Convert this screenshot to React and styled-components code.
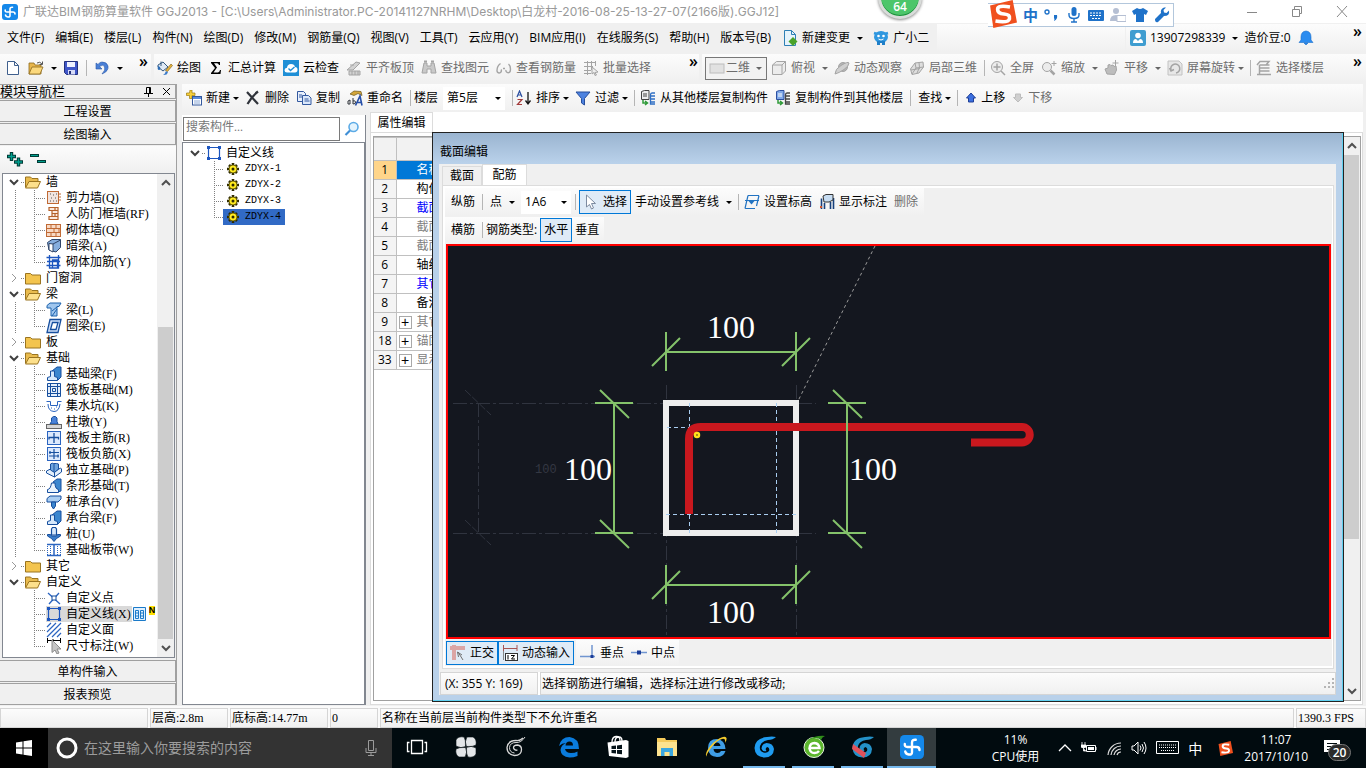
import React from "react";
import styled, { createGlobalStyle, css } from "styled-components";

const ui = `"Open Sans", "Noto Sans CJK SC", sans-serif`;
const song = `"Liberation Serif", "Noto Sans CJK SC", serif`;

const Global = createGlobalStyle`
  * { box-sizing: border-box; }
  body { margin: 0; font: 12px/16px ${ui}; color: #000; background: #f0f0f0; overflow: hidden; }
  button, input, select { font: inherit; color: inherit; margin: 0; padding: 0; border: 0; background: none; border-radius: 0; }
  ul { list-style: none; margin: 0; padding: 0; }
  svg { display: block; flex: none; }
`;

/* ---------- icon drawings, 16 x 16 grid ---------- */

const G = "#a4a4a4";
const B = "#174f9e";
const art = {
  app: (<><rect width="16" height="16" rx="3" fill="#1488ea" /><path d="M8 8V5Q8 3 10.500 3.200M8 8h3q2 0 2 2M8 8v3.500q0 1.800-2.200 1.500-2-.300-2.300-2M8 8H5Q3 8 3.200 6" fill="none" stroke="#fff" strokeWidth="1.600" strokeLinecap="round" /></>),
  doc: <path d="M2.500 1.500h7l4 4v9h-11zM9.500 1.500v4h4" fill="#fff" stroke="#3f5f8d" />,
  open: (<><path d="M1 3h5l1 2h6v9H1z" fill="#e8b64c" stroke="#8d6a1d" strokeWidth=".8" /><path d="M1 14l3-7h11l-3 7z" fill="#fbd87c" stroke="#8d6a1d" strokeWidth=".8" /><path d="M9 3q3-2 5 1M14.500 1.500v3h-3" fill="none" stroke="#555" /></>),
  save: (<><path d="M1.500 1.500h13v13h-11l-2-2z" fill="#3f56c8" stroke="#23307c" /><rect x="4" y="2" width="8" height="5" fill="#eef1ff" /><rect x="5" y="10" width="7" height="4.500" fill="#d7dcf7" /><rect x="6" y="11" width="2" height="3" fill="#23307c" /></>),
  undo: <path d="M2 3v6h6L5.500 6.500Q9 4 10.500 6.500 12 10 8 14q7-3 6-8-1-4-6-4Q5.500 2 4 4.500z" fill="#4a80d6" stroke="#2756a8" strokeWidth=".6" />,
  bucket: (<><path d="M1 5l5-3 5 5-5 4-5-4z" fill="#dfe9f5" stroke="#35597f" /><path d="M4 6V1.500" stroke="#35597f" /><path d="M1 6q-1 4 1 4t1-3" fill="#2d6cb5" /><path d="M14 4l1.500 1.500-5 6-2-1z" fill="#e4b23c" stroke="#7b5a16" strokeWidth=".6" /><path d="M9 11l2 1.500q-1 3-5 2.500 2-1 3-4z" fill="#3d7cc9" /></>),
  sigma: <path d="M3 2h9v3h-1q-.500-1.800-2-1.800H6L9 7.500 5.500 12.400H10q1.500 0 2-2.400h1l-.500 4H3v-1l4-5-4-5z" fill="#000" />,
  cloudcheck: (<><rect width="16" height="16" fill="#1f8fd6" /><path d="M4 12.500q-2.500 0-2.500-2.300T4 7.700Q4.500 4 8 4t4 3q2.500 0 2.500 2.700T12 12.500z" fill="#fff" /><path d="M5.500 8.500l2 2 4-3.500" fill="none" stroke="#1f8fd6" strokeWidth="1.400" /></>),
  align: (<><path d="M1 10l9-8 4 1-7 7zM3 11h11v4H3z" fill="#d2d2d2" stroke={G} /><path d="M6 11v4M9 11v4M12 11v4M4 5h4" stroke={G} /></>),
  binoc: (<><path d="M3 3h3v3h4V3h3l2 10h-5V9H6v4H1z" fill="#c9c9c9" stroke={G} /><path d="M3 1.500h3M10 1.500h3" stroke={G} strokeWidth="2" /></>),
  glasses: <path d="M5 9.500a2.200 2.200 0 1 1-4 1Q1 6 4.500 3.500M7 8.500h2M10 10a2.200 2.200 0 1 0 4.300 1Q15 6 12.500 4" fill="none" stroke={G} strokeWidth="1.400" />,
  gridsel: (<><path d="M1 2.500h12M1 6.500h9M1 10.500h7M1 13.500h7M4.500 1v14M8.500 1v9M12.500 1v5" stroke={G} fill="none" /><path d="M9 7l6 5-3 .500L13.500 15l-1.500.500-1-3-2 1.500z" fill="#eee" stroke={G} /></>),
  flat: <rect x="1" y="4" width="14" height="9" fill="#e1e1e1" stroke="#bcbcbc" />,
  cube: <path d="M1.500 5l4-3.500h9V11L11 14.500H1.500zM1.500 5H11v9.500M11 5l3.500-3.500" fill="#ececec" stroke={G} />,
  orbit: (<><circle cx="9" cy="7" r="4.500" fill="#b5b5b5" stroke={G} /><path d="M1 14Q1 9 7 5.500 14 1 15 3q0 3-5 6.500T1 14" fill="#d0d0d0" stroke={G} /></>),
  local3d: (<><path d="M1.500 9L6 3l8-1 .500 5L10 13l-7 1.500z" fill="#dedede" stroke={G} /><path d="M6 3l1 5-4 6M7 8l7.500-1M10 2.500l.500 5L8 13M2 10l9-1.500" fill="none" stroke={G} /></>),
  full: (<><circle cx="7" cy="7" r="5.500" fill="#ececec" stroke={G} /><path d="M7 3.500v7M3.500 7h7M11 11l4 4" stroke={G} strokeWidth="1.500" /></>),
  zoom: (<><circle cx="6" cy="7" r="4.500" fill="#ececec" stroke={G} /><path d="M9.500 10.500l4 4" stroke={G} strokeWidth="2.500" /><path d="M13 1v5M10.500 3.500h5" stroke={G} /></>),
  pan: (<><path d="M3 14L1 9l3-1V5l2-.500 1 1 2-.500 1 1.500 2-.500.500 4-2 4.500z" fill="#bdbdbd" stroke={G} /><path d="M11.500 0v6M8.500 3h6" stroke={G} /></>),
  rotate: (<><path d="M1 1h11l3 3v11H1z" fill="#e7e7e7" stroke="#c2c2c2" /><path d="M4 10a4.500 4.500 0 1 1 5 3M2.500 8L4 11l3-1.500" fill="none" stroke={G} strokeWidth="1.500" /></>),
  floors: <path d="M1 5l3-3.500h9L10 5M3.500 5h10M3.500 8h10M3.500 11h10M1 14.500h14M3.500 5v9" fill="none" stroke={G} strokeWidth="1.500" />,
  newitem: (<><path d="M4 0h2v3h3v2.500H6v3H3.500v-3H.500V3h3z" fill="#f7cf3a" stroke="#9b7a0b" strokeWidth=".7" /><rect x="6.500" y="6.500" width="9" height="8.500" fill="#fff" stroke="#33589d" /><path d="M7 8h8" stroke="#5a8adb" strokeWidth="2" /><path d="M8 11h6M8 13h6" stroke="#8ba9d8" /></>),
  cross: <path d="M2 2l11 12M13 1.500Q7 6 2.500 14" fill="none" stroke="#30343b" strokeWidth="2.200" />,
  copy: (<><path d="M1.500 1.500h6l2 2v8h-8z" fill="#e8f0fd" stroke="#33599f" /><path d="M6.500 5.500h6l2.500 2.500v6.500H6.500z" fill="#dbe8fb" stroke="#33599f" /><path d="M3 5h3M3 7h3M8.500 9h4M8.500 11h5" stroke="#33599f" /></>),
  rename: (<><path d="M3 4l4-3 7 .500 1 4-4-2-4 2z" fill="#d4a73b" stroke="#6c5418" strokeWidth=".7" /><path d="M1 14q-1-4 2-4v4zM6 8v6q3 0 2.500-2T6 11" fill="none" stroke="#30343b" /><path d="M8.500 15.500L13 6l2 9.500M10 12.500h4" fill="none" stroke="#274fa8" strokeWidth="1.600" /></>),
  sort: (<><path d="M1 7l2.500-6L6 7M2 5h3" fill="none" stroke="#2c4fa0" strokeWidth="1.200" /><path d="M1.500 9.500H6L1.500 14.500H6" fill="none" stroke="#a33a3a" strokeWidth="1.200" /><path d="M12 2v11M9.500 10.500L12 14l2.500-3.500" fill="none" stroke="#111" strokeWidth="1.300" /></>),
  filter: <path d="M1 2h14L9.500 8.500V15l-3-2V8.500z" fill="#4d82e0" stroke="#274f9c" />,
  copyfrom: (<><path d="M1.500 1.500l3-1H9v9H1.500z" fill="#eee" stroke="#444" /><path d="M3 4h4M3 6h4" stroke="#444" /><path d="M3 10v3h4M5 11l2.500 2L5 15" fill="none" stroke="#2f9a39" strokeWidth="1.500" /><path d="M15 3h-3q-1.500 0-1.500 2v9H15M15 6h-4M15 9h-4M15 12h-4" fill="none" stroke="#2f6fc4" strokeWidth="1.300" /></>),
  copyto: (<><path d="M1.500 1.500l3-1H9v9H1.500z" fill="#7fa8e8" stroke="#2c4fa0" /><path d="M3 4h4M3 6h4" stroke="#fff" /><path d="M3 10v3h4M5 11l2.500 2L5 15" fill="none" stroke="#2f9a39" strokeWidth="1.500" /><path d="M15 3h-3q-1.500 0-1.500 2v9H15M15 6h-4M15 9h-4M15 12h-4" fill="none" stroke="#444" strokeWidth="1.300" /></>),
  up: <path d="M6 3l4.500 5H8.500v4h-5V8h-2z" fill="#3b6fdf" stroke="#1e3f96" />,
  down: <path d="M6 12L1.500 7.500h2V4h5v3.500h2z" fill="#cfcfcf" stroke="#bdbdbd" />,
  change: (<><path d="M2.500.500h7l4 4v11h-11z" fill="#e6f3fb" stroke="#2e7fb5" /><path d="M9.500.500v4h4" fill="none" stroke="#2e7fb5" /><path d="M11 7l4.500 4.500L11 16l-4.500-4.500z" fill="#4aa32a" /></>),
  mascot: (<><path d="M1 3l3 1M15 3l-3 1" stroke="#2f97df" strokeWidth="2.500" /><ellipse cx="8" cy="7" rx="7" ry="6" fill="#2f97df" /><path d="M4 11h8v4H9v-2H7v2H4z" fill="#1f7fc8" /><circle cx="5.500" cy="6" r="1.300" fill="#fff" /><circle cx="10.500" cy="6" r="1.300" fill="#fff" /><path d="M5.500 9q2.500 2 5 0" stroke="#fff" fill="none" /></>),
  avatar: (<><rect width="16" height="16" rx="2" fill="#3f9dd0" /><circle cx="8" cy="5.500" r="2.800" fill="#fff" /><path d="M3 13q0-4 3-4l2 2 2-2q3 0 3 4z" fill="#fff" /></>),
  bell: <path d="M8 1q5 .500 5 6v3l2 2.500H1L3 10V7q0-5.500 5-6zM6 13h4l-2 2z" fill="#2b8cf0" stroke="#1b6ecb" strokeWidth=".6" />,
  search: (<><circle cx="9.500" cy="6" r="4.500" fill="#e3f3fd" stroke="#5cabe6" strokeWidth="1.600" /><path d="M6 9.500L1.500 14" stroke="#3f8fd6" strokeWidth="2.200" /></>),
  folder: <path d="M.500 3.500h5l1.500 1.500h8.500v9H.500z" fill="#f3c44e" stroke="#9a7420" />,
  folderopen: (<><path d="M.500 13V3h5l1.500 1.500h6V7" fill="#e9bb4e" stroke="#9a7420" /><path d="M.500 14L4 7.500h11.500L12.500 14z" fill="#fde08c" stroke="#9a7420" /></>),
  shear: (<><rect x="1.500" y="1.500" width="11" height="12" fill="#f1e4df" stroke="#c06a35" /><path d="M4 4h1M7 5h1M10 4h1M5 8h1M9 8h1M4 11h1M7 11h1M10 11h1" stroke="#555" /><path d="M13 4h2M13 7h2M13 10h2" stroke="#c06a35" /></>),
  airraid: <path d="M3 1.500h9v3v9H3v-3h3v-6H3zM6 4.500h6M6 7.500h6M6 10.500h6M9 2v2.500M9 7.500v3" fill="#fbeadf" stroke="#b5622b" strokeWidth="1.200" />,
  brick: (<><rect x=".500" y="2.500" width="14" height="12" fill="#f8d9c4" stroke="#c06a35" /><path d="M1 6.500h14M1 10.500h14M5 3v3.500M10 3v3.500M8 6.500v4M13 6.500v4M5 10.500v4M10 10.500v4" stroke="#c06a35" /></>),
  beamdark: (<><path d="M1.500 4.500L6 1.500h8.500v8L10 14l-7-2z" fill="#86aede" stroke="#2f4468" /><path d="M3 5.500l4 .500V14l-4-2z" fill="#fff" stroke="#2f4468" /><path d="M7 6l7.500-4" stroke="#2f4468" /></>),
  rebarwall: <path d="M.500 3.500h14M.500 11.500h14M3.500 1v13h9V1M6.500 14V6h5v8M1 7.500h13" fill="none" stroke="#1d56bf" strokeWidth="1.300" />,
  beam: (<><path d="M1 3.500L4 1h11l-2 3.500h-2V14H5V6H1z" fill="#9fc6ee" stroke="#1d62ad" /><path d="M6 14l5-7M6 9l5-4" stroke="#1d62ad" /></>),
  ring: <path d="M4 1.500h11L12 14.500H1zM6.500 4.500L4.500 11.500h5.500L12 4.500z" fill="#cfe0fa" stroke={B} strokeWidth="1.300" />,
  fbeam: (<><path d="M6 5l5-4h4v10l-3 3H6z" fill="#3a86cf" stroke={B} /><path d="M1.500 14.500v-3l3-1V5h4v5.500l3 1v3z" fill="#d5e8fb" stroke={B} /></>),
  raft: <path d="M1.500 1.500h13v13h-13zM4.500 1v14M11.500 1v14M1 4.500h14M1 11.500h14M6.500 6.500h3v3h-3z" fill="#e5effb" stroke={B} />,
  pit: <path d="M.500 3.500h4v4h7v-4h4M2 6q0 7 6 7.500 5 0 6-7.500M5 10h1M8 11h1M10 9h1" fill="none" stroke="#2a64c0" />,
  pier: (<><path d="M5.500 7.500V4l2-1.500h2L11 4v3.500l1 2.500H4z" fill="#4a82d8" stroke={B} /><rect x=".500" y="10.500" width="15" height="4" fill="#d6d6d6" stroke="#666" /></>),
  mainbar: (<><rect x="1.500" y="1.500" width="13" height="13" fill="#dce9fd" stroke="#2a64c0" /><path d="M8 3v10M3 9.500V7.500h9.500v2" fill="none" stroke={B} strokeWidth="1.300" /></>),
  negbar: (<><rect x="1.500" y="1.500" width="13" height="13" fill="#dce9fd" stroke="#2a64c0" /><path d="M8 3v10M3 6.500h10M3 10h10M4 5v3M12 8.500v3" fill="none" stroke={B} strokeWidth="1.200" /></>),
  isolated: (<><path d="M.500 9l4-2 4 3 6-4 1 1v3l-7 5-8-4z" fill="#e3effb" stroke={B} /><path d="M4.500 8V2l2-1 1 1V1.500h3l2 .500v5l-4 3.500z" fill="#6fa5de" stroke={B} /><path d="M8.500 10v5M8 2v8" stroke={B} /></>),
  strip: (<><path d="M7 4l4-3h4v12l-3 1z" fill="#3a86cf" stroke={B} /><path d="M1.500 14.500v-3q3 0 4-6.500h3.500q0 6 3.500 6.500v3z" fill="#e9f3fd" stroke={B} /></>),
  pilecap: (<><path d="M1 4.500L4 2h11v3l-3 3H1z" fill="#a9cdf1" stroke={B} /><path d="M5.500 8v4l2 3 2-3V8z" fill="#3a86cf" stroke={B} /></>),
  pile: (<><path d="M5.500 3l1-1.500h3l1 1.500v6h-5z" fill="#d7e8fa" stroke={B} strokeWidth="1.200" /><path d="M1.500 8.500h3l1 1.500h5l1-1.500h3v1.500l-4 2.500L8 15.500 5.500 12.500l-4-2.500z" fill="#3a7cc9" stroke={B} /></>),
  slabband: (<><path d="M1 2.500h14M1 13.500h14M8 3v10" stroke="#2a64c0" strokeWidth="1.500" /><path d="M1.500 4v9M4.500 4v9M11.500 4v9M14.500 4v9" stroke="#2a64c0" strokeDasharray="1 1" /></>),
  point: (<><path d="M2 3l12 11M13 3L3 14" stroke="#2a64c0" strokeWidth="1.300" /><rect x="6" y="6" width="4" height="4" fill="#fff" stroke={B} /></>),
  line: (<><path d="M2.500 2.500h11v11h-11z" fill="none" stroke="#1d56bf" strokeWidth="1.200" /><path d="M1 1h3v3H1zM12 1h3v3h-3zM1 12h3v3H1zM12 12h3v3h-3z" fill="#1d56bf" /></>),
  area: <path d="M1 5l4-4M1 10l9-9M1 15L15 1M6 15l9-9M11 15l4-4" stroke="#2a64c0" strokeWidth="1.200" />,
  dim: (<><path d="M1.500 0v5M14.500 0v5M1 2.500h14M7 1v3" stroke="#000" /><path d="M6 2l9 9h-4l2 4-2 1-2-4-3 2.500z" fill="#c5c5c5" stroke="#8c8c8c" /></>),
  pages: <path d="M1.500 1.500h12v13h-12zM3.500 4.500h3v8h-3zM8.500 4.500h3v8h-3zM3.500 7h3M8.500 7h3M3.500 10h3M8.500 10h3" fill="#dff0ff" stroke="#1b7ac9" />,
  gear: (<><path d="M6 0v12M0 6h12M2 2l8 8M10 2l-8 8" stroke="#2e2a00" strokeWidth="2.600" /><circle cx="6" cy="6" r="4" fill="#ffec20" stroke="#5b5000" strokeWidth=".8" /><circle cx="6" cy="6" r="1.500" fill="#2e2a00" /></>),
  cursor: <path d="M3.500 1v12l3-2.500 2 4.500 2-1-2-4.500h4z" fill="#fff" stroke="#7d8ba0" />,
  level: (<><path d="M4 1.500h11M1 14.500h10M4 1.500L1 14.500M15 1.500L12.500 12M1 6.500h14" fill="none" stroke="#2273c2" strokeWidth="1.200" /><path d="M4.500 7h6L7.500 10.500z" fill="#2273c2" /></>),
  label: (<><path d="M2.500 15V4.500M14.500 15V4M5.500 15V9M11.500 15V8" stroke="#17407c" strokeWidth="1.600" /><path d="M4 2l3-1.500h7V6l-4 2H5z" fill="#c7ddf3" stroke="#333" /><path d="M2 12v2" stroke="#d1542b" strokeWidth="2" /></>),
  ortho: (<><path d="M0 3h15M4 0v15" stroke="#dba5a5" strokeWidth="4" /><path d="M8 7l5 8M7.500 7l1 5M7.500 7l4.500 3" stroke="#6f6f6f" fill="none" /></>),
  dyn: (<><path d="M1.500 0v6M15 0v6M1 3.500h14" stroke="#a85454" /><rect x="3.500" y="8.500" width="12" height="7" fill="#fff" stroke="#333" /><path d="M6 10v4.500M9 10.500h3.500l-3 3.500H13" fill="none" stroke="#000" /><path d="M1.500 6v9" stroke="#888" /></>),
  perp: (<><path d="M12 0v13M0 11.500h15" stroke="#7095d0" strokeWidth="1.500" /><rect x="10.500" y="10" width="3" height="3" fill="#1b3d98" /></>),
  mid: (<><path d="M0 7.500h16" stroke="#7095d0" strokeWidth="1.500" /><rect x="6" y="5.500" width="4" height="4" fill="#1b3d98" /></>),
  plus2: (<><path d="M4.500 1v9M0 5.500h9M11.500 6.500v9M7 11h9" stroke="#003b35" strokeWidth="3.400" /><path d="M4.500 2v7M1 5.500h7M11.500 7.500v7M8 11h7" stroke="#00a08f" strokeWidth="1.400" /></>),
  minus2: (<><path d="M0 4.500h9M7 10.500h9" stroke="#003b35" strokeWidth="3" /><path d="M1 4.500h7M8 10.500h7" stroke="#00a08f" /></>),
};

const boxes = { gear: [12, 12], up: [12, 16], down: [12, 16] };

function Icon({ name, size = 16 }) {
  const [w, h] = boxes[name] || [16, 16];
  return <svg width={w === 16 ? size : w} height={w === 16 ? size : h} viewBox={`0 0 ${w} ${h}`} aria-hidden="true">{art[name]}</svg>;
}

const Caret = styled.i`
  flex: none;
  width: 0; height: 0;
  border: 3px solid transparent;
  border-top-color: ${(p) => (p.$off ? "#666" : "#000")};
  border-bottom: 0;
  margin: 0 -1px 0 ${(p) => (p.$near ? -1 : 3)}px;
`;

const Chevron = ({ dir = "down", color = "#404040", w = 2 }) => (
  <svg width="10" height="10" viewBox="0 0 10 10" aria-hidden="true">
    <path d={{ down: "M1 3l4 4 4-4", up: "M1 7l4-4 4 4", right: "M3 1l4 4-4 4" }[dir]} fill="none" stroke={color} strokeWidth={w} />
  </svg>
);

/* ---------- frame ---------- */

const Shell = styled.div`
  height: 100vh; min-height: 600px;
  display: flex; flex-direction: column;
  position: relative;
`;

const TitleBar = styled.header`
  height: 23px; flex: none;
  display: flex; align-items: center; gap: 5px;
  padding: 0 18px 0 2px;
  background: #fff; color: #999;
  h1 { flex: 1; margin: 0; font: 12px/16px Inter, "Noto Sans CJK SC", sans-serif; white-space: nowrap; }
`;
const WindowButtons = styled.div`
  display: flex; gap: 33px;
  button { display: block; }
`;

const stripBg = css`background: linear-gradient(#fcfcfc, #f0f0f0);`;

const BarRow = styled.div`
  display: flex; flex: none; gap: ${(p) => (p.$gap === undefined ? 3 : p.$gap)}px;
  height: 30px; padding-top: 1px;
`;
const Strip = styled.div`
  ${(p) => !p.$plain && stripBg}
  display: flex; align-items: center; gap: 7px;
  height: ${(p) => p.$h || 28}px;
  padding: 0 ${(p) => p.$pr || 0}px 0 ${(p) => p.$pl || 3}px;
  flex: ${(p) => (p.$w ? `0 0 ${p.$w}px` : p.$grow ? "1 1 0" : "none")};
  min-width: 0;
  white-space: nowrap;
`;
const MenuStrip = styled(Strip)` gap: 11px; flex: none; `;
const Tool = styled.button`
  display: flex; align-items: center; gap: 4px;
  flex: none;
  height: 24px;
  color: ${(p) => (p.disabled ? "#6d6d6d" : "#000")};
  white-space: nowrap;
`;
const Toggle = styled(Tool)`
  border: 1px solid #0078d7;
  background: #dfebf7;
  padding: 0 3px;
`;
const Sep = styled.span`
  width: 1px; height: 16px; flex: none; background: #b5b5b5;
  margin-right: ${(p) => (p.$after === undefined ? -2 : p.$after)}px;
`;
const More = styled.button`
  margin-left: auto; align-self: flex-start; padding-top: 1px;
  font-size: 16px; line-height: 12px; font-weight: 600;
`;
const Combo = styled.label`
  display: flex; align-items: center;
  flex: none;
  width: ${(p) => p.$w}px; height: 23px;
  padding: 0 5px 0 3px;
  margin-right: ${(p) => (p.$free ? 0 : -3)}px;
  background: ${(p) => (p.$framed ? "#f2f2f2" : "#fff")};
  border: ${(p) => (p.$framed ? "1px solid #777" : 0)};
  color: ${(p) => (p.$framed ? "#6d6d6d" : "#000")};
  select { appearance: none; flex: 1; min-width: 0; outline: 0; padding: 0 0 0 1px; opacity: 1; color: inherit; }
`;

const Workspace = styled.main`
  flex: 1; min-height: 0;
  display: grid; grid-template-columns: 177px minmax(0, 1fr);
  position: relative;
  padding: 1px 0;
`;

/* ---------- left navigation ---------- */

const Side = styled.aside`
  display: flex; flex-direction: column;
  border-right: 1px solid #a0a0a0;
  min-height: 0; gap: 1px;
`;
const SideHead = styled.div`
  display: flex; align-items: center; gap: 9px;
  height: 15px; padding-right: 4px; flex: none;
  border: 1px solid #a0a0a0; border-left: 0;
  h2 { flex: 1; margin: 0; font: 13px/13px ${song}; }
`;
const SideButton = styled.button`
  height: 22px; flex: none;
  border: 1px solid #a0a0a0; border-width: 1px 1px 1px 0;
  padding-top: 2px;
  background: #f0f0f0; font-family: ${song};
  text-align: center;
`;
const SideTools = styled.div`
  ${stripBg}
  display: flex; align-items: center; gap: 7px;
  height: 26px; padding-left: 7px; flex: none;
`;
const TreeBox = styled.div`
  flex: 1; min-height: 0; display: flex;
  margin: 0 1px 1px 2px;
  border: 1px solid #828790; background: #fff;
  overflow: hidden;
`;
const Tree = styled.ul` flex: 1; min-width: 0; font-family: ${song}; `;

const dotsV = "repeating-linear-gradient(to bottom, #808080 0 1px, transparent 1px 2px)";
const dotsH = "repeating-linear-gradient(to right, #808080 0 1px, transparent 1px 2px)";

const Node = styled.div`
  display: flex; align-items: center;
  height: 16px; padding-left: ${(p) => p.$indent}px;
  white-space: nowrap;
`;
const Twig = styled.i`
  width: 6px; height: 16px; flex: none;
  background: ${dotsH} 2px 8px / 4px 1px no-repeat;
`;
const Rail = styled.i`
  width: ${(p) => p.$w}px; height: 16px; flex: none;
  background: ${(p) => (p.$bare ? "none" : `${dotsV} 0 0 / 1px 16px no-repeat`)};
`;
const Elbow = styled.i`
  width: ${(p) => p.$w || 12}px; height: 16px; flex: none;
  background: ${dotsV} 0 0 / 1px ${(p) => (p.$last ? 8 : 16)}px no-repeat,
    ${dotsH} 0 8px / 100% 1px no-repeat;
`;
const NodeLabel = styled.button`
  display: flex; align-items: center; gap: ${(p) => p.$gap || 4}px;
  height: 16px; white-space: nowrap;
  background: ${(p) => p.$bg || "none"};
  font-size: 12px; line-height: 16px;
  padding-right: 1px;
`;
const ListItem = styled.button`
  display: flex; align-items: center; gap: 6px;
  height: 16px; padding: 0 4px;
  background: ${(p) => (p.$sel ? "#316ac5" : "none")};
`;
const NewMark = styled.b`
  align-self: flex-start; margin-left: 1px;
  font: bold 9px/9px "Liberation Sans", sans-serif;
  background: #ffe100;
`;
const Code = styled.span` font: 10px/16px "Liberation Mono", monospace; `;

const ScrollTrack = styled.div`
  width: 17px; flex: none;
  display: flex; flex-direction: column; align-items: center;
  background: #f0f0f0;
  button { height: 18px; flex: none; }
  i { width: 15px; flex: ${(p) => p.$thumb} 0 0; background: #cdcdcd; order: 2; }
  &::before { content: ""; order: 1; flex: ${(p) => p.$before} 0 0; }
  &::after { content: ""; order: 3; flex: ${(p) => p.$after} 0 0; }
  button:last-child { order: 4; }
`;
const Scroll = (p) => (
  <ScrollTrack {...p}>
    <button aria-label="向上滚动"><Chevron dir="up" color="#505050" /></button>
    <i />
    <button aria-label="向下滚动"><Chevron color="#505050" /></button>
  </ScrollTrack>
);

const groups = [
  { name: "墙", open: true, items: [["shear", "剪力墙(Q)"], ["airraid", "人防门框墙(RF)"], ["brick", "砌体墙(Q)"], ["beamdark", "暗梁(A)"], ["rebarwall", "砌体加筋(Y)"]] },
  { name: "门窗洞" },
  { name: "梁", open: true, items: [["beam", "梁(L)"], ["ring", "圈梁(E)"]] },
  { name: "板" },
  { name: "基础", open: true, items: [["fbeam", "基础梁(F)"], ["raft", "筏板基础(M)"], ["pit", "集水坑(K)"], ["pier", "柱墩(Y)"], ["mainbar", "筏板主筋(R)"], ["negbar", "筏板负筋(X)"], ["isolated", "独立基础(P)"], ["strip", "条形基础(T)"], ["pilecap", "桩承台(V)"], ["fbeam", "承台梁(F)"], ["pile", "桩(U)"], ["slabband", "基础板带(W)"]] },
  { name: "其它" },
  { name: "自定义", open: true, end: true, items: [["point", "自定义点"], ["line", "自定义线(X)"], ["area", "自定义面"], ["dim", "尺寸标注(W)"]] },
];

function Navigation() {
  return (
    <Side>
      <SideHead>
        <h2>模块导航栏</h2>
        <button aria-label="固定"><svg width="9" height="10"><path d="M2.500 6V.500h4V6M5.500 0v6M0 6.500h9M4.500 7v3" fill="none" stroke="#000" /></svg></button>
        <button aria-label="关闭"><svg width="9" height="9"><path d="M1 1l7 7M8 1L1 8" stroke="#000" /></svg></button>
      </SideHead>
      <SideButton>工程设置</SideButton>
      <SideButton>绘图输入</SideButton>
      <SideTools>
        <button aria-label="全部展开"><Icon name="plus2" /></button>
        <button aria-label="全部折叠"><Icon name="minus2" /></button>
      </SideTools>
      <TreeBox>
        <Tree>
          {groups.map((g) => (
            <li key={g.name}>
              <Node $indent={6}>
                <Chevron dir={g.open ? "down" : "right"} color={g.open ? "#404040" : "#999"} w={g.open ? 2 : 1} />
                <Twig />
                <NodeLabel $gap={5}><Icon name={g.open ? "folderopen" : "folder"} />{g.name}</NodeLabel>
              </Node>
              {g.open && (
                <ul>
                  {g.items.map(([icon, label], i) => (
                    <li key={label}>
                      <Node $indent={12}>
                        <Rail $w={19} $bare={g.end} />
                        <Elbow $last={i === g.items.length - 1} />
                        <NodeLabel $bg={icon === "line" ? "#d9d9d9" : ""}><Icon name={icon} />{label}</NodeLabel>
                        {icon === "line" && <><Icon name="pages" /><NewMark>N</NewMark></>}
                      </Node>
                    </li>
                  ))}
                </ul>
              )}
            </li>
          ))}
        </Tree>
        <Scroll $before={136} $thumb={313} $after={0} />
      </TreeBox>
      <SideButton>单构件输入</SideButton>
      <SideButton>报表预览</SideButton>
    </Side>
  );
}

/* ---------- component list and properties ---------- */

const Center = styled.section`
  display: flex; flex-direction: column; min-width: 0; min-height: 0;
  padding: 0 3px 0 5px;
`;
const FloorPick = styled.label` display: flex; align-items: center; gap: 5px; flex: none; `;
const Panes = styled.div` flex: 1; min-height: 0; display: flex; gap: 4px; `;
const ListPane = styled.div`
  width: 184px; flex: none;
  display: flex; flex-direction: column;
  margin-top: 3px;
  background: #fff; border-right: 1px solid #828790;
`;
const SearchRow = styled.div`
  display: flex; align-items: center; gap: 4px;
  padding: 2px 1px 1px; flex: none;
  input { width: 157px; height: 24px; border: 1px solid #7a7a7a; padding: 0 2px 3px; font-family: ${song}; outline: 0; }
  input::placeholder { color: #777; opacity: 1; }
`;
const ListBox = styled.div` flex: 1; border: 1px solid #828790; padding-top: 2px; font-family: ${song}; `;

const PropPane = styled.div` flex: 1; min-width: 0; display: flex; flex-direction: column; background: #fff; `;
const PropTab = styled.button`
  width: 63px; height: 20px; flex: none; border: 1px solid #dcdcdc; border-width: 1px 1px 0;
  font-family: ${song};
`;
const PropPage = styled.div`
  flex: 1; min-height: 0; display: flex;
  border: 1px solid #dcdcdc; padding: 3px 1px 3px 2px;
`;
const PropFrame = styled.div` flex: 1; display: flex; border: 1px solid #a0a0a0; min-width: 0; `;
const PropScroll = styled.div` flex: 1; min-width: 0; overflow: hidden; `;
const PropTable = styled.table`
  width: 100%; border-collapse: collapse; table-layout: fixed; font-family: ${song};
  th, td { height: 19px; padding: 0; border: 1px solid #c0c0c0; border-left: 0; font-weight: 400; line-height: 16px; white-space: nowrap; overflow: hidden; }
  thead th { height: 23px; background: #f2f2f2; }
  tbody th { background: #f4f4f4; text-align: center; font-family: ${ui}; }
`;
const PropRow = styled.tr`
  th { ${(p) => p.$sel && "background: #ffd58a !important;"} }
  td { color: ${(p) => p.$color || "#000"}; ${(p) => p.$sel && "background: #0078d7;"} }
`;
const PropName = styled.span`
  display: flex; align-items: center; gap: 5px;
  padding-left: ${(p) => (p.$group ? 2 : 20)}px;
  button { width: 13px; height: 13px; border: 1px solid #a9a9a9; background: #fff; color: #000; font: 14px/10px "Liberation Sans", sans-serif; }
`;
const props = [
  [1, "名称", "#fff"], [2, "构件"], [3, "截面", "#00f"], [4, "截面", "#808080"], [5, "截面", "#808080"],
  [6, "轴线"], [7, "其它", "#00f"], [8, "备注"], [9, "其它", "#808080", true], [18, "锚固", "#808080", true], [33, "显示", "#808080", true],
];

/* ---------- section editor window ---------- */

const Dialog = styled.section`
  position: absolute; left: 432px; right: 22px; top: 49px; bottom: 4px;
  display: flex; flex-direction: column;
  border: 1px solid #222; padding: 1px 7px 6px 6px;
  background: linear-gradient(#9ab4d0, #b9d1ea 30px);
  box-shadow: inset -1px -1px #5fd0f0;
`;
const DialogTitle = styled.h2` margin: 0; height: 30px; flex: none; font: 12px/36px ${song}; padding-left: 1px; `;
const DialogBody = styled.div` flex: 1; min-height: 0; display: flex; flex-direction: column; background: #f0f0f0; padding-left: 1px; `;
const Tabs = styled.div` display: flex; align-items: flex-end; height: 21px; padding-left: 2px; flex: none; `;
const Tab = styled.button`
  height: ${(p) => (p.$on ? 21 : 19)}px; width: ${(p) => (p.$on ? 45 : 40)}px;
  border: 1px solid #dcdcdc; border-bottom: 0;
  background: ${(p) => (p.$on ? "#fff" : "#f0f0f0")};
  font-family: ${song};
`;
const TabPage = styled.div`
  flex: 1; min-height: 0; display: flex; flex-direction: column; align-items: flex-start; gap: 1px;
  background: #f0f0f0; border: 3px solid #fff; border-right-width: 2px;
  outline: 1px solid #dcdcdc; outline-offset: -1px;
  margin: 0 2px 3px;
`;
const RebarStrip = styled.div`
  ${stripBg}
  display: flex; align-items: center; gap: 3px;
  height: 26px; padding: 0 5px 0 6px; flex: none; white-space: nowrap;
  ${Sep} { margin: 0 0 0 4px; }
`;
const Canvas = styled.div`
  flex: 1; min-height: 0; align-self: stretch; margin: 0 1px;
  background: #14171f; border: 2px solid #f00; overflow: hidden;
  svg { width: 100%; height: 100%; }
`;
const DialogStatus = styled.footer`
  display: flex; gap: 2px; height: 23px; flex: none;
  background: #fff;
`;
const Cell = styled.div`
  ${stripBg}
  flex: ${(p) => (p.$w ? `0 0 ${p.$w}px` : "1 1 0")};
  display: flex; align-items: center; justify-content: space-between;
  border: 1px solid #d5d5d5;
  padding-left: ${(p) => p.$pl || 1}px;
  font-family: ${(p) => (p.$ui ? ui : song)};
  white-space: nowrap; overflow: hidden;
`;
const Snaps = styled.div` display: flex; align-items: center; height: 26px; gap: 2px; flex: none; padding-left: 1px; `;
const Pair = styled.div` display: flex; margin-right: ${(p) => (p.$tight ? -3 : 0)}px; `;

function Dim({ x1, y1, x2, y2, tx, ty }) {
  const flat = y1 === y2;
  const mark = (x, y) => (flat ? `M${x} ${y - 20}v39M${x - 14} ${y + 14}l28-28` : `M${x - 19} ${y}h38M${x - 14} ${y - 13}l29 28`);
  return (
    <>
      <path d={`M${x1} ${y1}L${x2} ${y2}${mark(x1, y1)}${mark(x2, y2)}`} fill="none" stroke="#84c26a" strokeWidth="2" />
      <text x={tx} y={ty} fill="#fff" fontSize="32" fontFamily="Liberation Serif, serif">100</text>
    </>
  );
}

function Drawing() {
  return (
    <svg role="img" aria-label="截面配筋图">
      <g transform="translate(218 157)">
        <g fill="none" stroke="#30343f" strokeDasharray="14 3 3 3">
          <path d="M-213 .500H150M-213 130.500H150M.500-18V236M130.500-18V236M-187.500 0V130" />
          <path d="M-201-13l26 25M-201 117l26 25" strokeDasharray="8 2" />
        </g>
        <path d="M209-157L131 0" stroke="#9a9a9a" strokeDasharray="3 3" />
        <text x="-131" y="70" fill="#343843" fontSize="12" fontFamily="Liberation Mono, monospace">100</text>
        <rect width="130" height="130" fill="none" stroke="#eee" strokeWidth="6" />
        <path d="M23.500 0V130M110.500 0V130M1 24.500H23M0 111.500H130" stroke="#a9cdf0" strokeDasharray="4 3" />
        <path d="M23 111V36Q23 24 35 24H356a7.700 7.700 0 0 1 0 15.500H305" fill="none" stroke="#c9181e" strokeWidth="8" />
        <circle cx="31" cy="32" r="2" fill="#14171f" stroke="#ffe11c" strokeWidth="2.500" />
        <Dim x1={0} y1={-51} x2={130} y2={-51} tx={41} ty={-65} />
        <Dim x1={0} y1={182} x2={130} y2={182} tx={41} ty={220} />
        <Dim x1={-52} y1={0} x2={-52} y2={130} tx={-102} ty={77} />
        <Dim x1={181} y1={0} x2={181} y2={130} tx={183} ty={77} />
      </g>
    </svg>
  );
}

function SectionEditor() {
  return (
    <Dialog role="dialog" aria-label="截面编辑">
      <DialogTitle>截面编辑</DialogTitle>
      <DialogBody>
        <Tabs role="tablist">
          <Tab role="tab">截面</Tab>
          <Tab role="tab" $on>配筋</Tab>
        </Tabs>
        <TabPage>
          <Strip $pl={6} $pr={6} $h={28}>
            <Tool>纵筋</Tool><Sep $after={0} />
            <Tool>点<Caret /></Tool>
            <Combo $w={50}><select aria-label="钢筋信息"><option>1A6</option></select><Caret $near /></Combo>
            <Sep $after={-4} />
            <Pair $tight><Toggle><Icon name="cursor" />选择</Toggle></Pair>
            <Tool>手动设置参考线<Caret /></Tool><Sep />
            <Tool><Icon name="level" />设置标高</Tool>
            <Tool><Icon name="label" />显示标注</Tool>
            <Tool disabled>删除</Tool>
          </Strip>
          <RebarStrip>
            <Tool>横筋</Tool><Sep /><span>钢筋类型:</span>
            <Toggle>水平</Toggle><Tool>垂直</Tool>
          </RebarStrip>
          <Canvas><Drawing /></Canvas>
          <Snaps>
            <Pair>
              <Toggle><Icon name="ortho" />正交</Toggle>
              <Toggle><Icon name="dyn" />动态输入</Toggle>
            </Pair>
            <Strip $h={26} $pl={4} $pr={4}>
              <Tool><Icon name="perp" />垂点</Tool>
              <Tool><Icon name="mid" />中点</Tool>
            </Strip>
          </Snaps>
        </TabPage>
        <DialogStatus>
          <Cell $w={98} $pl={4} $ui>(X: 355 Y: 169)</Cell>
          <Cell>
            选择钢筋进行编辑，选择标注进行修改或移动;
            <svg width="12" height="12"><path d="M9 1h2M5 5h2M9 5h2M1 9h2M5 9h2M9 9h2" stroke="#b5b5b5" strokeWidth="2" /></svg>
          </Cell>
        </DialogStatus>
      </DialogBody>
    </Dialog>
  );
}

/* ---------- status bar, taskbar ---------- */

const StatusBar = styled.footer` display: flex; gap: 2px; height: 22px; padding-top: 2px; flex: none; background: #fafafa; `;

const Taskbar = styled.nav`
  display: flex; height: 40px; flex: none;
  background: #010b0f; color: #fff;
`;
const Start = styled.button` width: 48px; background: #000; display: grid; place-items: center; `;
const Cortana = styled.label`
  width: 344px; flex: none; background: #333; display: flex; align-items: center; gap: 6px; padding: 0 13px 0 8px;
  input { flex: 1; min-width: 0; font-size: 14px; outline: 0; }
  input::placeholder { color: #9c9c9c; opacity: 1; }
`;
const Task = styled.button`
  width: 49px; flex: none; display: grid; place-items: center;
  margin-left: ${(p) => (p.$apart ? 5 : 0)}px;
  background: ${(p) => (p.$active ? "#333c3f" : "none")};
  border-bottom: 2px solid transparent;
  ${(p) => p.$running && css`border-image: linear-gradient(to right, ${p.$active ? "#76b9ed 0 49px" : "transparent 4px, #76b9ed 4px 44px, transparent 44px"}) 1; border-width: 0 0 2px;`}
`;
const Tray = styled.div`
  margin-left: auto; display: flex; align-items: center; line-height: 17px; text-align: center;
  gap: 9px; padding-right: 8px;
`;
const Meter = styled.div` margin-right: 10px; `;
const Ime = styled.button` font-size: 14px; color: #fff; margin-right: 7px; `;
const Clock = styled.div` margin: 0 7px 0 2px; `;
const Notices = styled.button`
  position: relative; width: 34px; height: 24px;
  b { position: absolute; left: 4px; top: 8px; width: 23px; height: 17px; border-radius: 9px; background: #2b2b2b; border: 1px solid #777; font: 600 12px/15px ${ui}; color: #fff; }
`;
const SogouIcon = ({ size }) => (
  <svg width={size} height={size} viewBox="0 0 26 26" aria-hidden="true">
    <path d="M1 5L22 0l4 21-22 5z" fill="#f0501e" />
    <path d="M19.500 6.500Q8 4.500 8 8.500t6 4.500 5 4.500q-1 4-13 2" fill="none" stroke="#fff" strokeWidth="3.400" />
  </svg>
);

const s24 = (children) => <svg width="24" height="24" viewBox="0 0 24 24" aria-hidden="true">{children}</svg>;
const swirl = "M20 3q-3 3-7 2.500-8 0-9 7 0 7 7.500 8 7 0 7-6 0-4-4-4.500-4 0-4 3 1 3 4 2";
const glodon = "M23 2q-4-1-9 0Q2 3 1.500 13 2 22 11.500 22.500q9 0 9.500-8.500-1-6-7.500-6-5 1-5 5.500 1 3.500 5 2.500-2-3 1-4 2.500 1 1.500 4-2 2.500-5.500 1.500Q6 16 7 11q1.500-5 8-6 5 0 8-3z";
const tasks = [
  ["任务视图", s24(<path d="M6.500 5.500h11v13h-11zM4.500 7.500H2.500v9h2M19.500 7.500h2v9h-2" fill="none" stroke="#fff" strokeWidth="1.300" />)],
  ["风车", s24(<><path d="M11.500 11.500Q7 14 2 11V5q2-4 8-3 2 3 1.500 9.500zM12.500 11.500Q10 7 13 2h6q4 2 3 8-3 2-9.500 1.500zM12.500 12.500Q17 10 22 13v6q-2 4-8 3-2-3-1.500-9.500zM11.500 12.500Q14 17 11 22H5q-4-2-3-8 3-2 9.500-1.500z" fill="#e3e6e8" stroke="#010b0f" strokeWidth=".6" /></>)],
  ["广联达", s24(<><path d={swirl} fill="none" stroke="#d9d9d9" strokeWidth="1.300" /><path d="M22 2q-4 6-9 5.500-6 0-6.500 5 0 5 5 5.500" fill="none" stroke="#d9d9d9" /></>)],
  ["Edge", s24(<path d="M2 11Q4 2 12.500 2 22 3 22 14H8q1 4 6 4 4 0 6.500-1.500V21q-4 1.500-8 1.500Q4 22 3.500 15 4 10 9 8q-4 0-7 3zM8.500 10.500h7.500q0-4-3.500-4t-4 4z" fill="#0a7bdc" fillRule="evenodd" />), "apart"],
  ["应用商店", s24(<><path d="M1.500 7.500L20 5l2.500 1v16L20 23 3 21z" fill="#fff" /><path d="M6 7q0-5 4-5.500T14 6M9 7q0-5 4-5 3 0 3 4" fill="none" stroke="#fff" strokeWidth="1.300" /><path d="M5.500 11l4.500-.500V14H5.500zM11 10.400l5-.600V14h-5zM5.500 15H10v3.500l-4.500-.500zM11 15h5v4.300l-5-.600z" fill="#06141a" /></>)],
  ["文件资源管理器", s24(<><path d="M2 3h8l1 2h11v16H2z" fill="#f5cb5c" /><path d="M2 7h20v14H2z" fill="#fde38f" /><path d="M6 21v-8h12v8h-3.500v-4h-5v4z" fill="#3aa7e0" /></>)],
  ["Internet Explorer", s24(<><path d="M4 13Q4 4 13 4q8 1 8.500 10H9.500q.500 4 4 4 2.500 0 3.500-2h4.500q-2 6-8.500 6-8.500-.500-9-9zM9.500 11h7q-.500-3.500-3.500-3.500T9.500 11z" fill="#3f9ee6" fillRule="evenodd" /><path d="M3 22Q-1 19 9 8 20-1 22.500 3q.500 2-1.500 5 1-5-3-4-5 1-11 9T3 22z" fill="#f3cb2e" /></>)],
  ["广联达软件", s24(<path d={glodon} fill="#1f9cf0" />), "running"],
  ["360浏览器", s24(<><circle cx="12" cy="12.500" r="10" fill="#5cb52d" stroke="#e5f3dc" /><path d="M17.500 13H7.500Q8 8 12.500 8q4.500.500 5 5zM7.500 13q.500 5 5 5 3 0 4.500-2" fill="none" stroke="#fff" strokeWidth="2.400" /><path d="M3 6Q14 0 23 1q-3 1-4 4-2-2-5-2T3 6z" fill="#2f8d1a" /></>), "running"],
  ["广联达算量", s24(<><path d={glodon} fill="#2492c9" /><path d="M2 9l13 9-2 5L1 14z" fill="#e2535b" /></>), "running"],
  ["广联达GGJ", <svg key="a" width="24" height="24" viewBox="0 0 16 16">{art.app}</svg>, "active"],
];

/* ---------- floating widgets ---------- */

const SpeedBall = styled.div`
  position: absolute; left: 878px; top: -25px; width: 44px; height: 44px; border-radius: 50%;
  border: 3px solid #d9dcda; background: #4cc66a; box-shadow: 0 1px 3px #888, inset 0 -1px #1d8a3c;
  display: flex; align-items: flex-end; justify-content: center; padding-bottom: 1px;
  color: #fff; font-weight: 600; z-index: 3;
`;
const ImeBar = styled.div`
  position: absolute; left: 988px; top: 3px; height: 24px; width: 186px; z-index: 3;
  display: flex; align-items: center; gap: 6px; padding-left: 35px;
  background: #fff; border: 1px solid #b3c7dc; border-left: 0;
  color: #1f72c9; font-weight: 700; font-size: 15px;
  > svg:first-child { position: absolute; left: 1px; top: -4px; }
`;
const b16 = (c) => <svg width="16" height="16" viewBox="0 0 16 16" aria-hidden="true">{c}</svg>;

const menus = ["文件(F)", "编辑(E)", "楼层(L)", "构件(N)", "绘图(D)", "修改(M)", "钢筋量(Q)", "视图(V)", "工具(T)", "云应用(Y)", "BIM应用(I)", "在线服务(S)", "帮助(H)", "版本号(B)"];

export default function App() {
  return (
    <Shell>
      <Global />
      <TitleBar>
        <Icon name="app" />
        <h1>广联达BIM钢筋算量软件 GGJ2013 - [C:\Users\Administrator.PC-20141127NRHM\Desktop\白龙村-2016-08-25-13-27-07(2166版).GGJ12]</h1>
        <WindowButtons>
          <button aria-label="最小化"><svg width="12" height="11"><path d="M1 6.500h10" stroke="#888" /></svg></button>
          <button aria-label="还原"><svg width="12" height="11"><path d="M1.500 3.500h7v7h-7zM3.500 3V.500h7v7H9" fill="none" stroke="#888" /></svg></button>
          <button aria-label="关闭"><svg width="12" height="11"><path d="M1 0l10 11M11 0L1 11" stroke="#888" /></svg></button>
        </WindowButtons>
      </TitleBar>

      <BarRow $gap={1}>
        <MenuStrip $plain $pl={7} $pr={7} as="nav">
          {menus.map((m) => <Tool key={m}>{m}</Tool>)}
          <Tool><Icon name="change" />新建变更<Caret /></Tool>
          <Tool><Icon name="mascot" />广小二</Tool>
        </MenuStrip>
        <Strip $grow />
        <Strip $w={240} $pl={4} $pr={4}>
          <Tool><Icon name="avatar" />13907298339<Caret /></Tool>
          <Tool>造价豆:0</Tool>
          <Tool aria-label="通知"><Icon name="bell" /></Tool>
          <More aria-label="更多">»</More>
        </Strip>
      </BarRow>

      <BarRow>
        <Strip $w={151} $pl={5} $pr={3}>
          <Tool aria-label="新建"><Icon name="doc" /></Tool>
          <Tool aria-label="打开"><Icon name="open" /><Caret /></Tool>
          <Tool aria-label="保存"><Icon name="save" /></Tool>
          <Sep $after={0} />
          <Tool aria-label="撤销"><Icon name="undo" /><Caret /></Tool>
          <More aria-label="更多">»</More>
        </Strip>
        <Strip $w={545} $pr={1}>
          <Tool><Icon name="bucket" />绘图</Tool>
          <Tool><Icon name="sigma" />汇总计算</Tool>
          <Tool><Icon name="cloudcheck" />云检查</Tool>
          <Tool disabled><Icon name="align" />平齐板顶</Tool>
          <Tool disabled><Icon name="binoc" />查找图元</Tool>
          <Tool disabled><Icon name="glasses" />查看钢筋量</Tool>
          <Tool disabled><Icon name="gridsel" />批量选择</Tool>
          <More aria-label="更多">»</More>
        </Strip>
        <Strip $grow $pr={4}>
          <Combo $w={62} $framed><Icon name="flat" /><select aria-label="视图" disabled><option>二维</option></select><Caret $off $near /></Combo>
          <Tool disabled><Icon name="cube" />俯视<Caret $off /></Tool>
          <Tool disabled><Icon name="orbit" />动态观察</Tool>
          <Tool disabled><Icon name="local3d" />局部三维</Tool>
          <Sep />
          <Tool disabled><Icon name="full" />全屏</Tool>
          <Tool disabled><Icon name="zoom" />缩放<Caret $off /></Tool>
          <Tool disabled><Icon name="pan" />平移<Caret $off /></Tool>
          <Tool disabled><Icon name="rotate" />屏幕旋转<Caret $off $near /></Tool>
          <Sep />
          <Tool disabled><Icon name="floors" />选择楼层</Tool>
          <More aria-label="更多">»</More>
        </Strip>
      </BarRow>

      <Workspace>
        <Navigation />
        <Center>
          <Strip $pl={4}>
            <Tool><Icon name="newitem" />新建<Caret $near /></Tool>
            <Tool><Icon name="cross" />删除</Tool>
            <Tool><Icon name="copy" />复制</Tool>
            <Tool><Icon name="rename" />重命名</Tool>
            <Sep $after={-4} />
            <FloorPick>楼层<Combo as="span" $w={62} $free><select aria-label="楼层"><option>第5层</option></select><Caret $near /></Combo></FloorPick>
            <Sep $after={-4} />
            <Tool><Icon name="sort" />排序<Caret $near /></Tool>
            <Tool><Icon name="filter" />过滤<Caret $near /></Tool>
            <Sep />
            <Tool><Icon name="copyfrom" />从其他楼层复制构件</Tool>
            <Tool><Icon name="copyto" />复制构件到其他楼层</Tool>
            <Sep $after={0} />
            <Tool>查找<Caret $near /></Tool>
            <Sep $after={0} />
            <Tool><Icon name="up" />上移</Tool>
            <Tool disabled><Icon name="down" />下移</Tool>
          </Strip>
          <Panes>
            <ListPane>
              <SearchRow>
                <input aria-label="搜索构件" placeholder="搜索构件..." />
                <button aria-label="搜索"><Icon name="search" /></button>
              </SearchRow>
              <ListBox>
                <ul>
                  <li>
                    <Node $indent={7}>
                      <Chevron /><Twig />
                      <NodeLabel><Icon name="line" />自定义线</NodeLabel>
                    </Node>
                    <ul>
                      {[1, 2, 3, 4].map((n) => (
                        <li key={n}>
                          <Node $indent={31}>
                            <Elbow $last={n === 4} $w={9} />
                            <ListItem $sel={n === 4}><Icon name="gear" /><Code>{`ZDYX-${n}`}</Code></ListItem>
                          </Node>
                        </li>
                      ))}
                    </ul>
                  </li>
                </ul>
              </ListBox>
            </ListPane>
            <PropPane>
              <PropTab>属性编辑</PropTab>
              <PropPage>
                <PropFrame>
                  <PropScroll>
                    <PropTable>
                      <colgroup><col width="22" /><col width="240" /><col /></colgroup>
                      <thead><tr><th aria-label="序号" /><th aria-label="属性名称" /><th aria-label="属性值" /></tr></thead>
                      <tbody>
                        {props.map(([n, name, color, group]) => (
                          <PropRow key={n} $sel={n === 1} $color={color}>
                            <th scope="row">{n}</th>
                            <td><PropName $group={group}>{group && <button aria-label="展开">+</button>}{name}</PropName></td>
                            <td />
                          </PropRow>
                        ))}
                      </tbody>
                    </PropTable>
                  </PropScroll>
                  <Scroll $before={0} $thumb={385} $after={143} />
                </PropFrame>
              </PropPage>
            </PropPane>
          </Panes>
        </Center>
        <SectionEditor />
      </Workspace>

      <StatusBar>
        <Cell $w={148} />
        <Cell $w={78}>层高:2.8m</Cell>
        <Cell $w={98}>底标高:14.77m</Cell>
        <Cell $w={48}>0</Cell>
        <Cell>名称在当前层当前构件类型下不允许重名</Cell>
        <Cell $w={70}>1390.3 FPS</Cell>
      </StatusBar>

      <Taskbar>
        <Start aria-label="开始">{b16(<path d="M0 2.500L6.500 1.500v6H0zM7.500 1.300L16 0v7.500H7.500zM0 8.500h6.500v6L0 13.500zM7.500 8.500H16V16l-8.500-1.300z" fill="#fff" />)}</Start>
        <Cortana>
          <svg width="22" height="22"><circle cx="11" cy="11" r="9" fill="none" stroke="#fff" strokeWidth="3" /></svg>
          <input aria-label="搜索" placeholder="在这里输入你要搜索的内容" />
          {b16(<path d="M5.500 .500h5v10h-5zM3 8v4.500h10V8M8 12.500V15.500M5 15.500h6" fill="none" stroke="#9c9c9c" />)}
        </Cortana>
        {tasks.map(([label, icon, state]) => (
          <Task key={label} aria-label={label} $apart={state === "apart"} $running={state === "running" || state === "active"} $active={state === "active"}>{icon}</Task>
        ))}
        <Tray>
          <Meter>11%<br />CPU使用</Meter>
          <svg width="14" height="16"><path d="M1 11l6-6 6 6" fill="none" stroke="#fff" strokeWidth="1.300" /></svg>
          {b16(<><path d="M5.500 5.500h9v6h-9zM15 7v3" fill="none" stroke="#fff" /><path d="M7 7h6v3H7z" fill="#fff" /><path d="M1 2v3M4 2v3M0 5h5v2Q2.500 9 0 7zM2.500 8v3H5" fill="#fff" stroke="#fff" strokeWidth=".8" /></>)}
          {b16(<path d="M2 15A13 13 0 0 1 15 3M5 15A10 10 0 0 1 15 6M8 15a7 7 0 0 1 7-6M11 15a4 4 0 0 1 4-3" fill="none" stroke="#ddd" strokeWidth="1.200" />)}
          {b16(<path d="M1 6h2l4-4v12L3 10H1zM9 5.500q2 2.500 0 5M11 4q3 4 0 8M13 2q4 6 0 12" fill="none" stroke="#fff" />)}
          <svg width="23" height="14"><path d="M.500.500h22v12H.500z" fill="none" stroke="#fff" /><path d="M3 4h17M3 6.500h17M5 9.500h13" stroke="#fff" strokeDasharray="1 1" /></svg>
          <Ime>中</Ime>
          <SogouIcon size={15} />
          <Clock>11:07<br />2017/10/10</Clock>
          <Notices aria-label="通知中心">
            <svg width="16" height="16"><path d="M0 0h16v12H8l-3 4v-4H0z" fill="#fff" /><path d="M3 3.500h10M3 6.500h10M3 9.500h6" stroke="#010b0f" /></svg>
            <b>20</b>
          </Notices>
        </Tray>
      </Taskbar>

      <SpeedBall>64</SpeedBall>
      <ImeBar>
        <SogouIcon size={28} />
        中
        {b16(<><circle cx="3" cy="5" r="2" fill="none" stroke="#1f72c9" strokeWidth="1.400" /><path d="M10 8h3q1 4-3 6 1-2 0-3z" fill="#1f72c9" /></>)}
        {b16(<><rect x="5.500" y="0" width="5" height="9" rx="2.500" fill="#1f72c9" /><path d="M3 6v2q0 3.500 5 3.500T13 8V6M8 12v3M5 15h6" fill="none" stroke="#1f72c9" strokeWidth="1.400" /></>)}
        {b16(<><rect y="3" width="16" height="11" rx="1" fill="#1f72c9" /><path d="M2 6h12M2 8.500h12M4 11.500h8" stroke="#fff" strokeDasharray="2 1" /></>)}
        {b16(<><circle cx="6" cy="4" r="3" fill="#b5bfd3" /><path d="M0 14q0-6 6-6t6 6z" fill="#b5bfd3" /><rect x="7" y="8.500" width="9" height="6" fill="#fff" stroke="#b5bfd3" /></>)}
        {b16(<path d="M5 1q3 2 6 0l5 3-2 4-2-1v8H4V7L2 8 0 4z" fill="#1f72c9" />)}
        {b16(<path d="M1 12l6-6q-1-4 3-5.500h2L9.500 3l.500 2.500 2.500.500L15 3.500Q16 9 10 9l-6 6q-3 1-3-3z" fill="#1f72c9" />)}
      </ImeBar>
    </Shell>
  );
}
